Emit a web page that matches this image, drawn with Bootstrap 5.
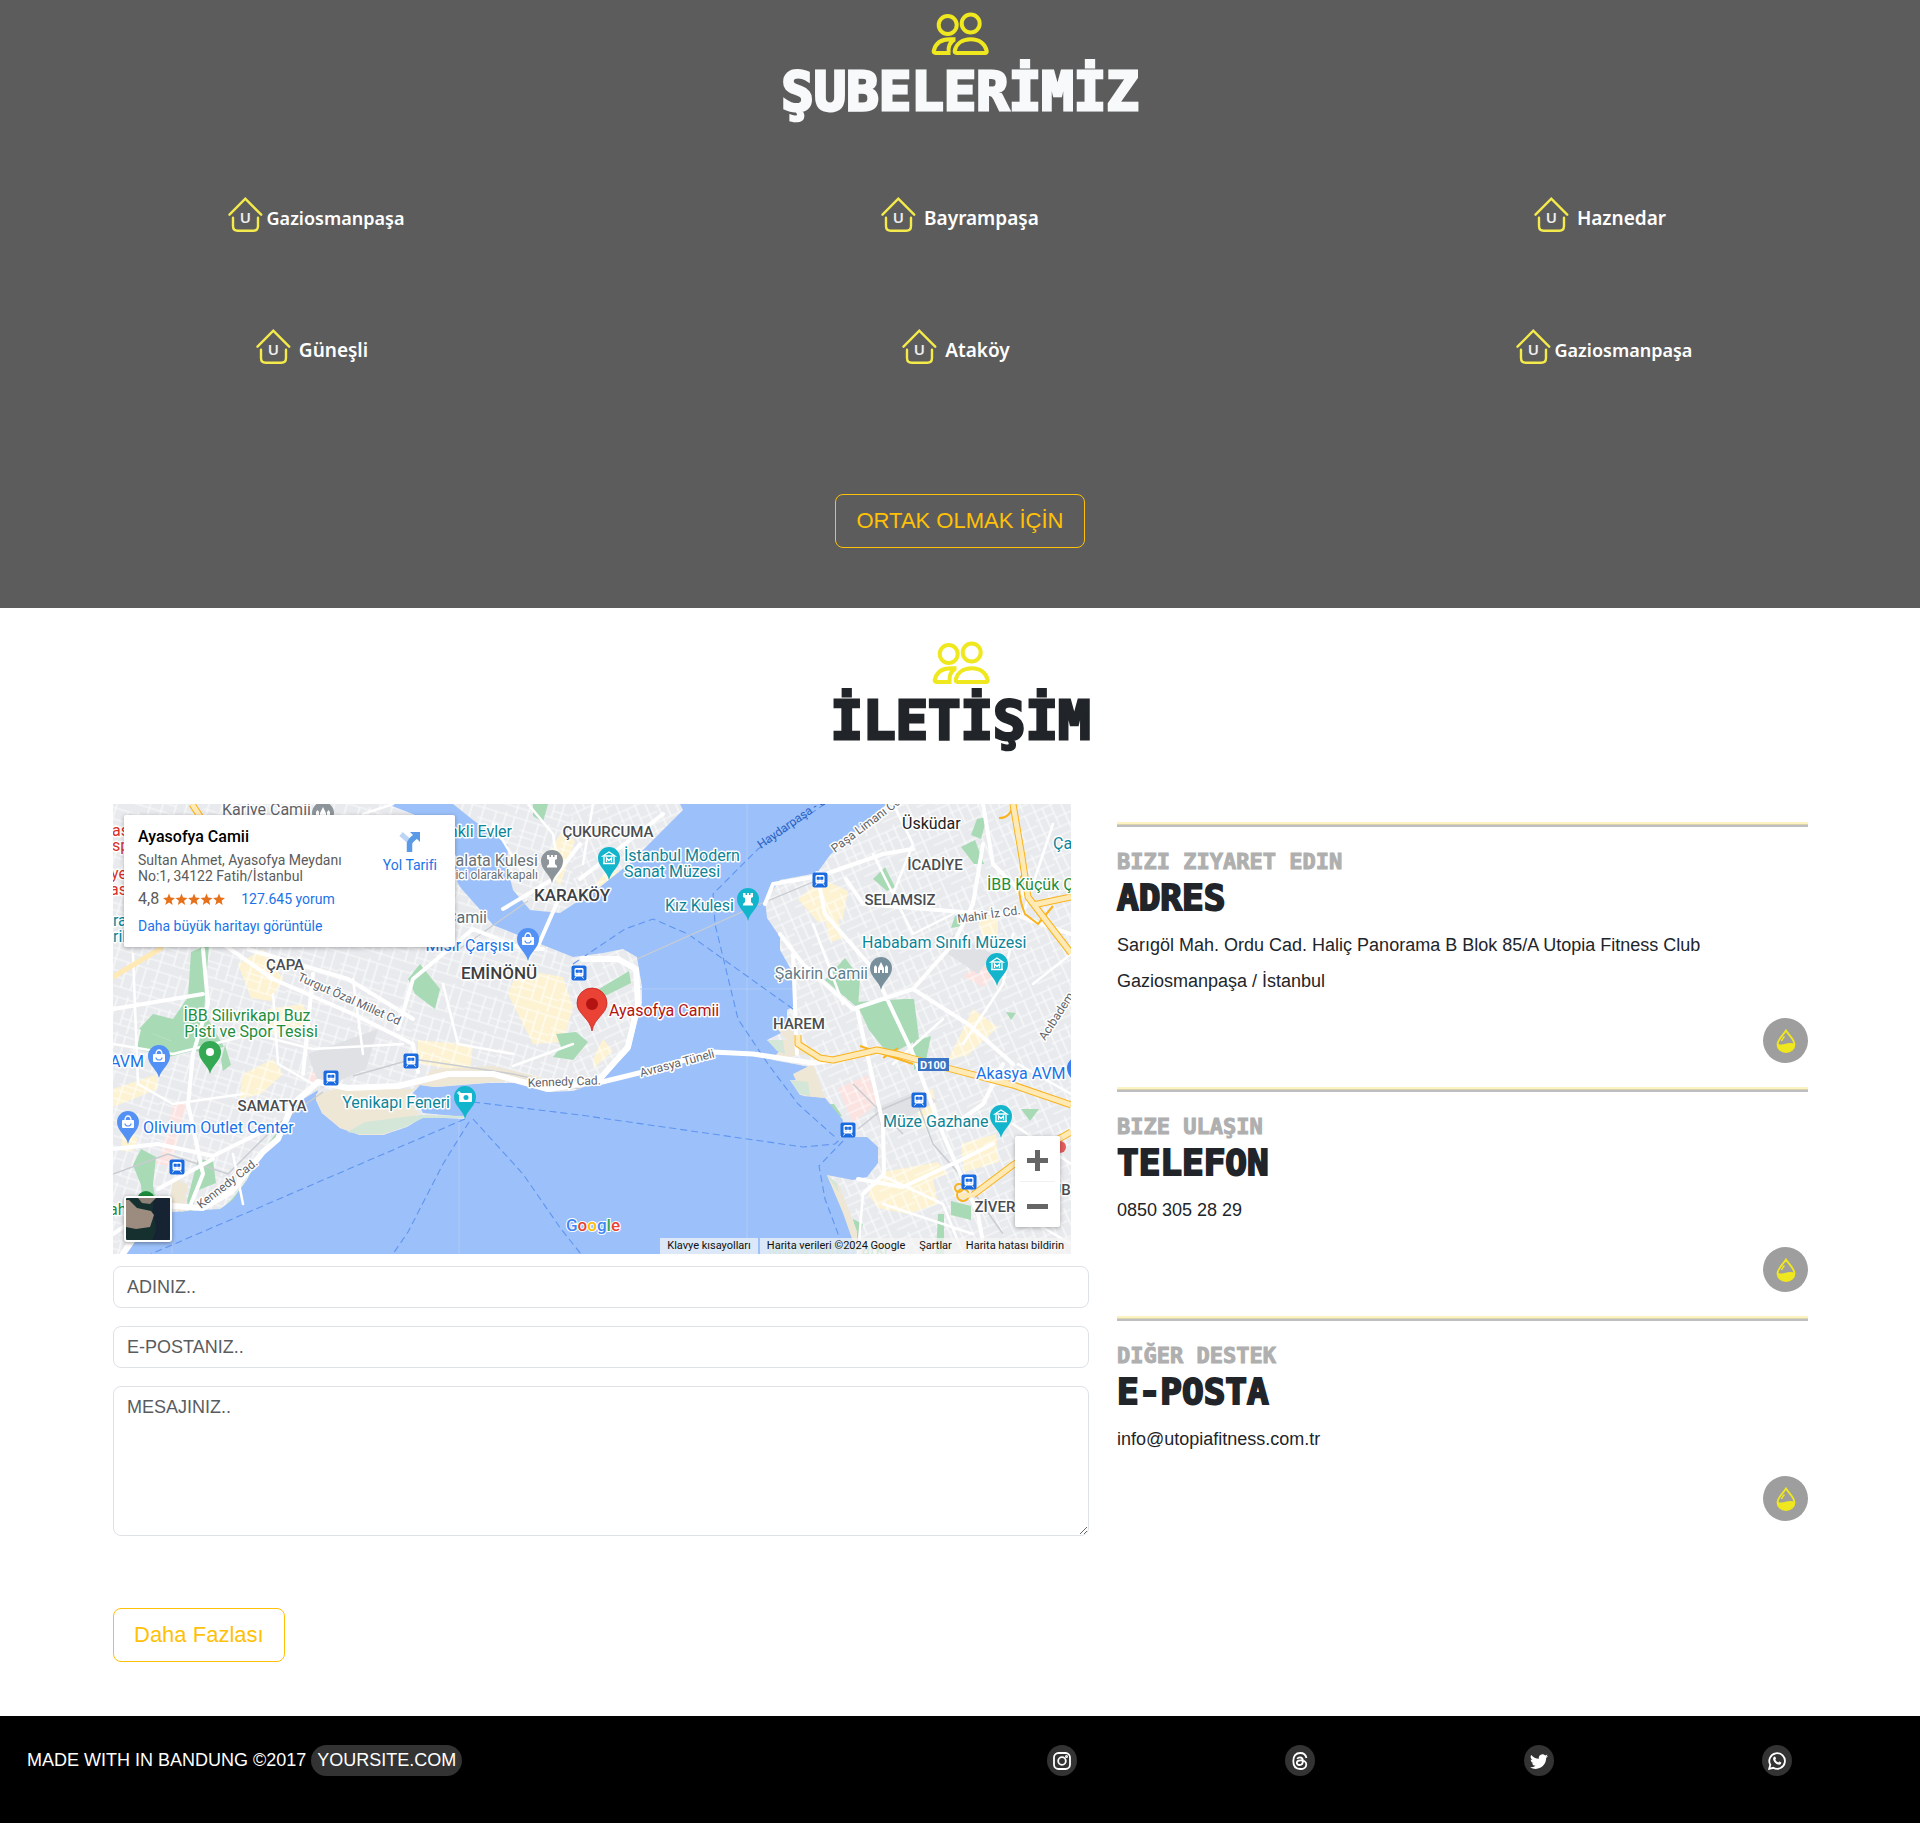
<!DOCTYPE html>
<html lang="tr">
<head>
<meta charset="utf-8">
<meta name="viewport" content="width=device-width, initial-scale=1">
<title>Utopia Fitness</title>
<link href="https://cdn.jsdelivr.net/npm/bootstrap@5.3.0/dist/css/bootstrap.min.css" rel="stylesheet">
<style>
  body{font-family:"Liberation Sans",Arial,sans-serif;font-size:18px;padding-right:7px;background:#fff}
  .display-face{font-family:"DejaVu Sans Mono",monospace;font-weight:700;margin:0}
  .section-title{font-size:54px;line-height:56px;-webkit-text-stroke:3px currentColor}
  .branches{background:#5c5c5c;padding:12px 0 60px}
  .branch-grid{padding:71px 0 117px;row-gap:78px}
  .branch{font-family:"Noto Sans",sans-serif;font-weight:600;font-size:19px;line-height:54px;color:#fff}
  .branch-long{font-size:18px}
  .branch svg{margin-bottom:6px}
  .branch:hover{color:#f4ea3c}
  .btn-big{font-size:22px;line-height:36px;padding:8px 20px;border-radius:8px}
  .contact{padding:33px 112px 54px 113px}
  .contact-body{padding-top:55px;column-gap:28px}
  .col-form{flex:976 1 0;min-width:0}
  .col-info{flex:691 1 0;min-width:0;padding-top:18px}
  .map-box{height:450px;margin-right:18px;overflow:hidden;font-family:Roboto,sans-serif;background:#e8eaed}
  .map-box>svg{width:100%;height:450px;display:block}
  .contact-form{gap:18px;padding-top:12px}
  .contact-form textarea{height:150px}
  .contact-form .btn-big{margin-top:54px}
  .form-control{font-size:18px;line-height:28px;padding:6px 13px;border-radius:8px;color:#212529}
  .form-control::placeholder{color:#595c5f}
  .info-rule{height:5px;margin:0;border:0;opacity:1;background:linear-gradient(#fdf3c0 0 2px,#dad3ab 2px 3px,#bcbec0 3px)}
  .info-label{font-size:22px;line-height:24px;color:#afafaf;margin-top:23px;-webkit-text-stroke:1px currentColor}
  .info-title{font-size:36px;line-height:36px;margin:6px 0 11px;-webkit-text-stroke:2px currentColor}
  .info-text{line-height:36px;margin:0 0 19px}
  .drop{width:45px;height:45px;background:#9e9e9e;margin-bottom:24px}
  /* map overlays */
  .place{left:11px;top:11px;width:331px;height:132px;padding:12px 14px;border-radius:2px;box-shadow:0 1px 4px rgba(0,0,0,.3);font-size:14px;line-height:16px;color:#5b5b5b}
  .place a{color:#1a73e8;text-decoration:none}
  .place-name{font-size:16px;line-height:20px;font-weight:500;color:#000;margin:0 0 5px}
  .place-rate{font-size:16px;line-height:20px;padding:5px 0 9px}
  .zoomer{right:11px;bottom:27px;width:45px;height:91px;border-radius:2px;box-shadow:0 1px 4px rgba(0,0,0,.3)}
  .zoomer button{border:0;background:none;height:45px;padding:0}
  .zoomer hr{margin:0 5px;border-color:#c8c8c8}
  .thumb{left:11px;bottom:12px;width:48px;height:46px;border:2px solid #fff;border-radius:3px;box-shadow:0 1px 4px rgba(0,0,0,.4);padding:0;overflow:hidden}
  .thumb svg{display:block}
  .credits{right:0;bottom:0;font-size:11px;line-height:16px;gap:2px}
  .credits a,.credits button{font-size:11px;line-height:16px;padding:0 7px;border:0;background:rgba(245,245,245,.72);color:#111;text-decoration:none}
  .page-foot{background:#000;color:#fff;padding:29px 24px 47px 27px}
  .pill{background:#333;color:#fff;border-radius:16px;padding:0 6px;line-height:31px;margin-left:5px}
  .social{flex:0 0 51%}
  .social a{width:30px;height:31px;background:#333}
  .halo text{stroke:#fff;stroke-width:3px;stroke-linejoin:round;paint-order:stroke}
</style>
<script src="https://cdn.jsdelivr.net/npm/bootstrap@5.3.0/dist/js/bootstrap.bundle.min.js"></script>
</head>
<body>
<svg width="0" height="0" class="position-absolute" aria-hidden="true">
  <symbol id="people" viewBox="0 0 58 44">
    <g fill="none" stroke="#f0e81e" stroke-width="4">
      <circle cx="16.7" cy="13" r="9"/><circle cx="39.7" cy="11.5" r="9"/>
      <path d="M25.5 41H54q2 0 1.700-2C54.500 32 48.500 27.300 39.700 27.300S25 32 23.700 39q-.2 2 1.800 2z"/>
      <path d="M19.500 41H4.500q-2 0-1.800-2C4.500 31 9.500 27.300 19 27.300h5.500M23.500 27.500C18.500 30.500 17 36 17.700 41"/>
    </g>
  </symbol>
  <symbol id="house" viewBox="0 0 35 36">
    <g fill="none" stroke="#f4ea4c" stroke-width="2.400" stroke-linecap="round">
      <path d="M1.500 17.700 17.300 1.700 33.200 17.700"/><path d="M5 20.700V29q0 4.700 4.700 4.700h15.600Q30 33.700 30 29V20.700"/>
    </g>
    <text x="17.400" y="26" text-anchor="middle" font-family="Noto Sans,sans-serif" font-weight="600" font-size="15" fill="#eee">U</text>
  </symbol>
  <symbol id="dropicon" viewBox="0 0 20 24">
    <path d="M10 1.500C7 6.500 1.500 10.500 1.500 15.500a8.500 7.500 0 0 0 17 0C18.500 10.500 13 6.500 10 1.500z" fill="none" stroke="#f0e81e" stroke-width="1.800"/>
    <path d="M1.500 14.800q4 1.300 8 0t9-.3a8.500 8 0 0 1-17 .3z" fill="#f0e81e"/>
    <path d="M5.500 12q1-2.500 3-4.500" stroke="#f0e81e" stroke-width="1.500" fill="none"/>
  </symbol>
</svg>

<section class="branches text-center">
  <svg width="58" height="44" class="d-block mx-auto" aria-hidden="true"><use href="#people"/></svg>
  <h2 class="display-face section-title text-light mt-2">ŞUBELERİMİZ</h2>
  <div class="row g-0 branch-grid">
    <div class="col-4 d-flex justify-content-center pe-2"><a href="#" class="branch branch-long d-flex align-items-center text-decoration-none gap-1"><svg width="35" height="36"><use href="#house"/></svg>Gaziosmanpaşa</a></div>
    <div class="col-4 d-flex justify-content-center"><a href="#" class="branch d-flex align-items-center text-decoration-none gap-2"><svg width="35" height="36"><use href="#house"/></svg>Bayrampaşa</a></div>
    <div class="col-4 d-flex justify-content-center"><a href="#" class="branch d-flex align-items-center text-decoration-none gap-2"><svg width="35" height="36"><use href="#house"/></svg>Haznedar</a></div>
    <div class="col-4 d-flex justify-content-center pe-3"><a href="#" class="branch d-flex align-items-center text-decoration-none gap-2"><svg width="35" height="36"><use href="#house"/></svg>Güneşli</a></div>
    <div class="col-4 d-flex justify-content-center pe-2"><a href="#" class="branch d-flex align-items-center text-decoration-none gap-2"><svg width="35" height="36"><use href="#house"/></svg>Ataköy</a></div>
    <div class="col-4 d-flex justify-content-center ps-2"><a href="#" class="branch branch-long d-flex align-items-center text-decoration-none gap-1"><svg width="35" height="36"><use href="#house"/></svg>Gaziosmanpaşa</a></div>
  </div>
  <button type="button" class="btn btn-outline-warning btn-big">ORTAK OLMAK İÇİN</button>
</section>

<section class="contact">
  <div class="text-center">
    <svg width="58" height="44" class="d-block mx-auto" aria-hidden="true"><use href="#people"/></svg>
    <h2 class="display-face section-title mt-2">İLETİŞİM</h2>
  </div>
  <div class="d-flex contact-body">
    <div class="col-form">
      <div class="map-box position-relative">
        <svg viewBox="0 0 958 450" preserveAspectRatio="xMidYMid slice" role="img" aria-label="Harita">
          <defs>
            <pattern id="st1" width="44" height="36" patternUnits="userSpaceOnUse" patternTransform="rotate(17)"><path d="M0 3h44M0 14h27M27 22h17M0 29h44M4 0v36M17 3v26M27 0v29M36 3v33M0 20h17" stroke="#fff" stroke-width="1.200" stroke-opacity=".8" fill="none"/></pattern>
            <pattern id="st2" width="38" height="42" patternUnits="userSpaceOnUse" patternTransform="rotate(-24)"><path d="M0 4h38M0 13h20M20 18h18M0 28h38M11 36h27M3 0v42M11 4v24M20 0v28M30 4v38" stroke="#fff" stroke-width="1.200" stroke-opacity=".8" fill="none"/></pattern>
            <g id="pinshape"><path d="M0 22C-2 13-11 9-11 0a11 11 0 0 1 22 0C11 9 2 13 0 22z"/></g>
            <g id="museum" fill="none" stroke="#fff" stroke-width="1.300"><path d="M-6-2 0-6 6-2zM-5-1V5M5-1V5M-6 5.500H6M-2.500 4V0L0 2.500 2.500 0v4"/></g>
            <g id="bag"><rect x="-6" y="-2" width="12" height="8" rx="1" fill="#fff"/><path d="M-3-2a3 4 0 0 1 6 0" fill="none" stroke="#fff" stroke-width="1.300"/><path d="M-3 1.500a3 2.500 0 0 0 6 0" fill="none" stroke="#5491f5" stroke-width="1.200"/></g>
            <g id="rook" fill="#fff"><path d="M-5-6h2.500v2H-1v-2h2v2h1.500v-2H5v4L3-1v4l2 2v1.500H-5V5l2-2v-4l-2-1z"/></g>
            <g id="mosque" fill="#fff"><path d="M-7 5V-1l1.500-2L-4-1v6zM4 5V-1l1.500-2L7-1v6zM-3 5V0l3-6 3 6v5H1V2h-2v3z"/></g>
            <g id="tram"><rect x="-7.500" y="-7.500" width="15" height="15" rx="2" fill="#1a6ae0"/><rect x="-4.500" y="-5" width="9" height="8.500" rx="1.500" fill="#fff"/><path d="M-3-3h2.500v2.500H-3zM.5-3H3v2.500H.5zM-2.500 1.200h1M1.500 1.200h1" fill="#1a6ae0" stroke="#1a6ae0" stroke-width=".6"/><path d="M-3 3.500-4.500 5.500M3 3.500 4.500 5.500" stroke="#fff"/></g>
          </defs>
          <rect width="958" height="450" fill="#e8eaed"/>
          <!-- built-up and commercial areas -->
          <g fill="#fdf3d3">
            <path d="M125 160l25-15 20 30-12 22-20-3zM155 205l35-5 8 22-40 8zM405 165l45 8 10 30-10 35-30 2-25-50zM0 285l45-15v15l-45 18zM130 270l30-15 10 15-22 20-22 5zM305 236l55 5-3 28-52-10zM430 60l20-35 12 12-15 45zM525 70l-30-5-20 25 12 5zM685 95l25-20 25 12-5 28-25 3zM712 118l12-6 6 22-12 4zM865 112h20v24h-15zM755 390l15-22 55-10 10 12-15 5 5 25-30 10-30-6zM860 205l25 18-30 28-20 5zM800 290l20-5 5 30-16 10zM848 340l35-10 3 28-35 10zM10 320l15 15-5 12H8zM480 255l10-20 10 12-20 18z"/>
          </g>
          <g fill="#fbe3e1"><path d="M60 300l14-2-15 60-12-3zM195 270l15-5 2 12-12 6zM725 284l30-13 10 28-25 20zM850 172l20-14 15 10-15 15zM42 360l8-12 12 4-5 10z"/></g>
          <rect width="460" height="450" fill="url(#st1)"/><rect x="460" width="498" height="450" fill="url(#st2)"/>
          <g fill="#dfe1e5"><path d="M195 250l70-25-12 40-45 20-8-20zM840 130l40 20-15 20-30-20zM760 305l45-18 20 10-55 30z"/></g>
          <!-- parks -->
          <g fill="#a8dab5">
            <path d="M78 148l18-8-5 68 20 35-25 5-45-18-15-5 14-15 20 5 15-22zM28 225l30 12 15-20 13 28-30 8-32-8zM295 175l12-15 20 25-5 20-20-15zM108 256l4-15 6 20-8 6zM28 345l15 8-3 28 6 35-16-10-2-25-8-20zM85 355l15 2 3 22-20 8-5 30-4-20zM743 198l48-3h10l5 40-30 16-20-25zM712 176l20-22 15 20-2 30zM760 75l12-12 10 20-8 4zM848 43l14-7 9 24-10 0zM842 112l10-6-2 16-12 2zM476 200l10-15 30-18 2 12-30 15zM443 230l20-2 12 10-15 18-20-3 8-10zM864 15l10-2-6 22-10-4zM420 0h15l-5 18-10-6zM800 238l18-6-5 24-12 10zM838 397l20 5 0 14-20-5zM825 410h6v40h-8zM740 415l10 5-6 20zM908 305h18l-9 12zM709 300l12 0 8 12-12 3zM893 208l10 1-5 7z"/>
            <path d="M104 410l16-16 14-18 12-25 20-25 8-12-4 20-20 22-22 30-18 24-20 4z"/>
          </g>
          <!-- sea -->
          <path fill="#9cc0f9" d="M12 450 24 426 59 408 107 405 120 396 134 376 147 353 162 339 169 319 184 299 205 286 203 296 209 309 227 324 247 331H270L294 323 310 313 352 315V313L310 309 300 289 307 281 324 283 375 279 407 279 434 288 460 287 487 277 517 246 529 199V183L524 153 510 145 490 149 460 153 430 141 380 121 370 109 347 83 330 50 315 16 274 0H340L360 16 395 41 394 63 400 86 417 106 447 109 487 83 517 59 547 29 570 6 567 0H774L754 16 717 51 704 69 667 76 652 96 654 114 667 133V146L680 169 682 186 680 203 674 206 674 226 654 236 667 246 660 256 697 263V276L677 276 687 291 712 294 730 316 727 333H754L765 343V359L754 373 740 376 714 371 724 393 744 429V450z"/>
          <path fill="#efe7d6" d="M203 290l20-5h77l20-20 60-3 50 12-60 5-50 4-13-2-10 8-3 8 12 12-16 14-20 8h-23l-20-7-18-15-6-13zM660 220h14l20 30-35 6 8-10-13-10h20zM680 270l20-10 12 34-22-2zM714 371l12 10 18 46v22l-14-40zM60 375l15 5-5 28-14-4z"/>
          <path fill="#d3e6d8" d="M234 328l18-10 55-7 45 1v2l-42 0-18 9-22 7h-23zM654 236h16l2 14-8-3zM677 276l18 2 2 14-10-2zM714 371l10 8 2 10z"/>
          <g stroke="#b0ccf9" stroke-width="1"><path d="M59 408V450M346 315V450M634 0V450M525 185H682"/></g>
          <!-- ferry lines and cable -->
          <g fill="none" stroke="#5f95f0" stroke-width="1.100" stroke-dasharray="7 4">
            <path d="M352 315 38 450M356 318 330 360 295 428 280 450M360 315 410 370 448 425 468 450M360 298 467 311 690 343 722 340 728 334M460 160 512 125 540 115 575 130 680 205M712 0 645 45 600 90 602 120 625 215 655 260 685 300 722 333M730 337 706 362 712 395 727 435"/>
          </g>
          <path d="M524 155 640 103 700 78M415 97 345 146" fill="none" stroke="#c8cdd2" stroke-width="1.200"/>
          <g fill="none" stroke="#c9ccd1" stroke-width="1.500"><path d="M0 370 55 350 115 370 165 320 210 288M240 272 300 255 400 270 467 285M805 300 820 340 855 380 890 430M790 330 760 300 740 280M745 325 770 305 805 290"/></g>
          <!-- main streets -->
          <g fill="none" stroke="#fff" stroke-linejoin="round" stroke-linecap="round">
            <path stroke-width="6" d="M10 450 25 428M59 402 90 404 118 388 150 348 165 335 180 300 205 278 235 284 285 282 335 270 380 270 435 285 485 277 515 243 525 200 523 165 505 155 470 155"/>
            <path stroke-width="5" d="M485 279 530 268 600 248 640 250 700 259 720 256"/>
            <path stroke-width="4" d="M110 140 160 175 240 210 300 240 305 268M135 145 235 175 300 215M90 145 95 200 80 250 75 300 90 370 78 400M0 205 90 190M200 170 190 270M430 145 410 145 360 125 300 175 285 225M425 142 447 92M390 105 440 75 467 40M0 345 45 340 100 352 165 320M45 385 100 355M30 410 0 430M467 75 550 10M704 69 712 110 760 165 800 250 830 330 865 410 872 450M652 100 660 80 707 72 770 50 800 45M667 130 690 160 740 205 800 185 840 140 860 100 870 40M744 205 770 320 771 370 750 390M745 375 790 383 850 355 880 340M733 75 750 100 850 108 900 110 958 130M680 150 684 250M800 185 855 220 900 260M870 0 880 60 915 95M835 325 870 300 890 260"/>
            <path stroke-width="2.500" d="M0 240 60 250 140 230 200 245 290 240M20 150 25 280 60 300 130 290M120 350 130 400M160 190 165 260 200 280M240 175 250 250M330 180 345 240 400 250M460 240 400 262M280 0 250 10M415 0 440 30 445 60M480 0 470 60M380 20 410 70M700 120 730 200M760 50 800 130 840 110M780 0 800 40 780 90M900 130 890 180 850 240M920 180 958 150M940 20 910 110M780 260 830 215M770 400 860 430M750 390 745 450M770 372 830 400 850 450M890 400 958 440M900 320 958 360M905 260 958 290"/>
          </g>
          <!-- motorways -->
          <g fill="none" stroke-linejoin="round">
            <g stroke="#f9b31c" stroke-width="7"><path d="M685 231V240L707 254 720 256 764 246 787 251 834 264 900 281 958 301M900 0 909 53 915 93 958 149M920 101 958 93M860 391 900 361 958 328M79 0 88 14"/><circle cx="850" cy="391" r="6" stroke-width="2"/><circle cx="846" cy="384" r="4" stroke-width="2"/><path d="M747 242 800 260M770 254 785 244M900 0Q898 14 886 14M913 65Q900 80 912 110L925 120 940 102" stroke-width="2"/></g>
            <g stroke="#ffe9b5" stroke-width="5"><path d="M685 231V240L707 254 720 256 764 246 787 251 834 264 900 281 958 301M900 0 909 53 915 93 958 149M920 101 958 93M846 392 860 391 900 361 958 328M79 0 88 14M0 173 50 143"/></g>
          </g>
          <!-- labels -->
          <g class="halo" font-size="16" fill="#0c8599">
            <text x="109" y="11" fill="#5f6368">Kariye Camii</text>
            <g fill="#d93025"><text x="-1" y="32">aş</text><text x="-1" y="47">sp</text><text x="-2" y="75">ye</text><text x="-3" y="91">as</text></g>
            <text x="0" y="122">ra</text><text x="0" y="138">ril</text>
            <text x="399" y="33" text-anchor="end">Renkli Evler</text>
            <g fill="#6b7075" text-anchor="end"><text x="425" y="62">Galata Kulesi</text><text x="425" y="75" font-size="12">Geçici olarak kapalı</text></g>
            <text x="374" y="119" text-anchor="end" fill="#546e7a">Yeni Camii</text>
            <text x="401" y="147" text-anchor="end" fill="#1a73e8">Mısır Çarşısı</text>
            <g fill="#1e8e3e" text-anchor="middle"><text x="134" y="217">İBB Silivrikapı Buz</text><text x="138" y="233">Pisti ve Spor Tesisi</text></g>
            <text x="511" y="57">İstanbul Modern</text><text x="511" y="73">Sanat Müzesi</text>
            <text x="621" y="107" text-anchor="end">Kız Kulesi</text>
            <text x="789" y="25" fill="#202124">Üsküdar</text>
            <text x="874" y="86" fill="#1e8e3e">İBB Küçük Ç</text><text x="940" y="45">Ça</text>
            <text x="749" y="144">Hababam Sınıfı Müzesi</text>
            <text x="755" y="175" text-anchor="end" fill="#607d8b">Şakirin Camii</text>
            <text x="496" y="212" fill="#b31412">Ayasofya Camii</text>
            <g fill="#1a73e8"><text x="31" y="263" text-anchor="end">AVM</text><text x="30" y="329">Olivium Outlet Center</text><text x="863" y="275">Akasya AVM</text></g>
            <text x="337" y="304" text-anchor="end">Yenikapı Feneri</text>
            <text x="770" y="323">Müze Gazhane</text>
            <text x="-4" y="411" fill="#1e8e3e">ah</text>
            <g fill="#4a4d51" font-weight="500" font-size="15" text-anchor="middle">
              <text x="495" y="33">ÇUKURCUMA</text><text x="459" y="97" font-size="17" fill="#3c4043">KARAKÖY</text><text x="386" y="175" font-size="17" fill="#3c4043">EMİNÖNÜ</text><text x="172" y="166">ÇAPA</text><text x="822" y="66">İCADİYE</text><text x="787" y="101">SELAMSIZ</text><text x="686" y="225">HAREM</text><text x="159" y="307">SAMATYA</text><text x="882" y="408">ZİVER</text><text x="948" y="391">UB</text>
            </g>
            <g fill="#5f6368" font-size="12">
              <text transform="translate(184 176) rotate(24)">Turgut Özal Millet Cd</text>
              <text transform="translate(722 49) rotate(-37)">Paşa Limanı Cd.</text>
              <text transform="translate(845 119) rotate(-8)">Mahir İz Cd.</text>
              <text transform="translate(88 405) rotate(-38)">Kennedy Cad.</text>
              <text transform="translate(415 283) rotate(-2)">Kennedy Cad.</text>
              <text transform="translate(528 273) rotate(-15)">Avrasya Tüneli</text>
              <text transform="translate(932 237) rotate(-57)">Acıbadem</text>
            </g>
          </g>
          <text transform="translate(648 45) rotate(-35)" font-size="12" fill="#2a62c4">Haydarpaşa - C</text>
          <text x="655" y="451" font-size="16" fill="#87c797">Moda Sahil Parkı</text>
          <rect x="805" y="254" width="31" height="13" fill="#3b74c4"/><text x="820" y="265" font-size="11" font-weight="700" text-anchor="middle" fill="#fff">D100</text>
          <!-- pins -->
          <g transform="translate(439 57)" fill="#8d949a"><use href="#pinshape"/><use href="#rook"/></g>
          <g transform="translate(210 9)" fill="#8d949a"><use href="#pinshape"/><use href="#mosque"/></g>
          <g transform="translate(415 135)" fill="#5491f5"><use href="#pinshape"/><use href="#bag"/></g>
          <g transform="translate(46 252)" fill="#5491f5"><use href="#pinshape"/><use href="#bag"/></g>
          <g transform="translate(15 318)" fill="#5491f5"><use href="#pinshape"/><use href="#bag"/></g>
          <g transform="translate(965 264)" fill="#3b7ef0"><use href="#pinshape"/></g>
          <g transform="translate(496 54)" fill="#12b5cb"><use href="#pinshape"/><use href="#museum"/></g>
          <g transform="translate(884 160)" fill="#12b5cb"><use href="#pinshape"/><use href="#museum"/></g>
          <g transform="translate(888 312)" fill="#12b5cb"><use href="#pinshape"/><use href="#museum"/></g>
          <g transform="translate(635 95)" fill="#12b5cb"><use href="#pinshape"/><use href="#rook"/></g>
          <g transform="translate(768 164)" fill="#78909c"><use href="#pinshape"/><use href="#mosque"/></g>
          <g transform="translate(97 248)" fill="#34a853"><use href="#pinshape"/><circle r="4" fill="#fff"/></g>
          <g transform="translate(352 293)" fill="#12b5cb"><use href="#pinshape"/><rect x="-6" y="-4" width="13" height="9" rx="1" fill="#fff"/><circle cx="1" cy=".5" r="2.500"/><path d="M-6-6v4M-8-4h4" stroke="#fff"/></g>
          <circle cx="33" cy="396" r="9" fill="#1e8e3e"/><circle cx="947" cy="343" r="6" fill="#e35b5b"/>
          <path d="M479 227C477 214 464 210 464 199a15 15 0 0 1 30 0C494 210 481 214 479 227z" fill="#ea4335" stroke="#c5221f" stroke-width=".8"/><circle cx="479" cy="200" r="6" fill="#b31412"/>
          <use href="#tram" x="466" y="169"/><use href="#tram" x="707" y="76"/><use href="#tram" x="218" y="274"/><use href="#tram" x="298" y="257"/><use href="#tram" x="64" y="363"/><use href="#tram" x="806" y="296"/><use href="#tram" x="735" y="326"/><use href="#tram" x="856" y="378"/>
          <text x="453" y="427" font-size="17" font-weight="500" stroke="#fff" stroke-width="2" paint-order="stroke"><tspan fill="#4285f4">G</tspan><tspan fill="#ea4335">o</tspan><tspan fill="#fbbc04">o</tspan><tspan fill="#4285f4">g</tspan><tspan fill="#34a853">l</tspan><tspan fill="#ea4335">e</tspan></text>
        </svg>
        <div class="place position-absolute bg-white d-flex justify-content-between">
          <div>
            <p class="place-name">Ayasofya Camii</p>
            <div>Sultan Ahmet, Ayasofya Meydanı<br>No:1, 34122 Fatih/İstanbul</div>
            <div class="place-rate d-flex align-items-center">4,8
              <svg width="62" height="13" viewBox="0 0 62 13" class="ms-1 me-3" fill="#e7711b" aria-hidden="true"><defs><path id="star" d="M6 .5 7.600 4.600 12 4.900 8.600 7.700 9.700 12 6 9.600 2.300 12 3.400 7.700 0 4.900 4.400 4.600z"/></defs><use href="#star"/><use href="#star" x="12.500"/><use href="#star" x="25"/><use href="#star" x="37.500"/><use href="#star" x="50"/></svg>
              <a href="#" class="small">127.645 yorum</a></div>
            <a href="#">Daha büyük haritayı görüntüle</a>
          </div>
          <a href="#" class="text-center me-1"><svg width="22" height="22" viewBox="0 0 22 22" class="d-block mx-auto mt-1 mb-1"><path d="M2 3 10 10" stroke="#bcd5f5" stroke-width="5"/><path d="M10.500 21V13q0-3 6-7.500" fill="none" stroke="#5a9ae6" stroke-width="5.500"/><path d="M11 1h10v10z" fill="#5a9ae6"/></svg>Yol Tarifi</a>
        </div>
        <button type="button" class="thumb position-absolute" aria-label="Uydu görüntüsü"><svg width="44" height="42" viewBox="0 0 44 42"><rect width="44" height="42" fill="#16302f"/><path d="M28 0h16v42H26q8-14 0-24z" fill="#152332"/><path d="M0 2h3l8 8 14 3 3 4-4 12-14 2-10-2z" fill="#9c8c7f"/><path d="M12 0h18l-6 6-8-1z" fill="#8e8177"/></svg></button>
        <div class="zoomer position-absolute bg-white d-flex flex-column">
          <button type="button" aria-label="Yakınlaştır"><svg width="21" height="21"><path d="M10.500 0v21M0 10.500h21" stroke="#666" stroke-width="5"/></svg></button>
          <hr>
          <button type="button" aria-label="Uzaklaştır"><svg width="21" height="21"><path d="M0 10.500h21" stroke="#666" stroke-width="5"/></svg></button>
        </div>
        <div class="credits position-absolute d-flex"><button type="button">Klavye kısayolları</button><div class="d-flex"><a href="#">Harita verileri ©2024 Google</a><a href="#">Şartlar</a><a href="#">Harita hatası bildirin</a></div></div>
      </div>
      <form class="contact-form d-flex flex-column align-items-start">
        <input type="text" class="form-control" aria-label="Adınız" placeholder="ADINIZ..">
        <input type="email" class="form-control" aria-label="E-postanız" placeholder="E-POSTANIZ..">
        <textarea class="form-control" aria-label="Mesajınız" placeholder="MESAJINIZ.."></textarea>
        <button type="button" class="btn btn-outline-warning btn-big">Daha Fazlası</button>
      </form>
    </div>
    <div class="col-info">
      <hr class="info-rule">
      <p class="display-face info-label">BIZI ZIYARET EDIN</p>
      <h3 class="display-face info-title">ADRES</h3>
      <p class="info-text">Sarıgöl Mah. Ordu Cad. Haliç Panorama B Blok 85/A Utopia Fitness Club<br>Gaziosmanpaşa / İstanbul</p>
      <div class="drop rounded-circle ms-auto d-flex align-items-center justify-content-center"><svg width="20" height="24"><use href="#dropicon"/></svg></div>
      <hr class="info-rule">
      <p class="display-face info-label">BIZE ULAŞIN</p>
      <h3 class="display-face info-title">TELEFON</h3>
      <p class="info-text">0850 305 28 29</p>
      <div class="drop rounded-circle ms-auto d-flex align-items-center justify-content-center"><svg width="20" height="24"><use href="#dropicon"/></svg></div>
      <hr class="info-rule">
      <p class="display-face info-label">DIĞER DESTEK</p>
      <h3 class="display-face info-title">E-POSTA</h3>
      <p class="info-text">info@utopiafitness.com.tr</p>
      <div class="drop rounded-circle ms-auto d-flex align-items-center justify-content-center"><svg width="20" height="24"><use href="#dropicon"/></svg></div>
    </div>
  </div>
</section>

<footer class="page-foot d-flex align-items-center">
  <div class="flex-fill d-flex align-items-center">MADE WITH IN BANDUNG ©2017 <a href="#" class="pill text-decoration-none">YOURSITE.COM</a></div>
  <div class="social d-flex">
    <div class="col d-flex justify-content-center"><a href="#" aria-label="Instagram" class="rounded-circle d-flex align-items-center justify-content-center"><svg width="18" height="18" fill="none" stroke="#fff" stroke-width="1.800"><rect x="1" y="1" width="16" height="16" rx="4.500"/><circle cx="9" cy="9" r="3.800"/><circle cx="13.500" cy="4.500" r=".6"/></svg></a></div>
    <div class="col d-flex justify-content-center"><a href="#" aria-label="Threads" class="rounded-circle d-flex align-items-center justify-content-center"><svg width="18" height="18" viewBox="0 0 18 18" fill="none" stroke="#fff" stroke-width="1.800"><path d="M15.500 6C14.700 2.500 12.500 1 9.300 1 4.700 1 2.300 4 2.300 9s2.400 8 7 8c3.500 0 6-2 6-4.600 0-3-2.800-4.100-5.800-4.100-2.400 0-3.700.9-3.700 2.500 0 1.400 1.200 2.200 2.800 2.200 2.200 0 3.300-1.400 3.300-4 0-2.400-1-3.600-2.900-3.600-1.300 0-2.200.5-2.800 1.500"/></svg></a></div>
    <div class="col d-flex justify-content-center"><a href="#" aria-label="Twitter" class="rounded-circle d-flex align-items-center justify-content-center"><svg width="18" height="18" viewBox="0 0 16 16" fill="#fff"><path d="M5.026 15c6.038 0 9.341-5.003 9.341-9.334 0-.14 0-.282-.006-.422A6.685 6.685 0 0 0 16 3.542a6.658 6.658 0 0 1-1.889.518 3.301 3.301 0 0 0 1.447-1.817 6.533 6.533 0 0 1-2.087.793A3.286 3.286 0 0 0 7.875 6.030a9.325 9.325 0 0 1-6.767-3.429 3.289 3.289 0 0 0 1.018 4.382A3.323 3.323 0 0 1 .64 6.575v.045a3.288 3.288 0 0 0 2.632 3.218 3.203 3.203 0 0 1-.865.115 3.230 3.230 0 0 1-.614-.057 3.283 3.283 0 0 0 3.067 2.277A6.588 6.588 0 0 1 .78 13.580a6.320 6.320 0 0 1-.78-.045A9.344 9.344 0 0 0 5.026 15z"/></svg></a></div>
    <div class="col d-flex justify-content-center"><a href="#" aria-label="WhatsApp" class="rounded-circle d-flex align-items-center justify-content-center"><svg width="18" height="18" viewBox="0 0 18 18"><path d="M1.200 16.800 2.300 12.800A7.800 7.800 0 1 1 5.300 15.800z" fill="none" stroke="#fff" stroke-width="1.800"/><path d="M6.200 4.700q.8-.5 1.200.3l.6 1.500q.1.400-.7 1.300 1 1.900 3 2.800.9-1.100 1.200-1l1.700.9q.3 1.900-2 2.300C8 12.700 4.400 8.700 5.200 6q.3-.8 1-1.300z" fill="#fff"/></svg></a></div>
  </div>
</footer>
</body>
</html>
